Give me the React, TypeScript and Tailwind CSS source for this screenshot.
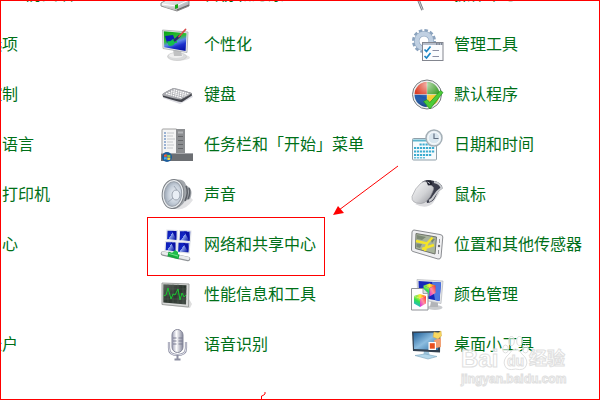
import type { ReactNode } from "react";

function Icon({ children }: { children: ReactNode }) {
  return (
    <svg viewBox="0 0 32 32" className="size-8 shrink-0 overflow-visible" aria-hidden="true">
      {children}
    </svg>
  );
}

/* Gradients shared by all of the icons */
function SharedGradients() {
  return (
    <svg className="absolute size-0" aria-hidden="true">
      <defs>
        <linearGradient id="silver" x1="0" y1="0" x2="1" y2="1">
          <stop offset="0" stopColor="#fbfbfb" />
          <stop offset="0.55" stopColor="#d2d3d6" />
          <stop offset="1" stopColor="#8f9096" />
        </linearGradient>
        <linearGradient id="blueScreen" x1="0" y1="0" x2="1" y2="0.6">
          <stop offset="0" stopColor="#0a18a8" />
          <stop offset="0.5" stopColor="#1226c8" />
          <stop offset="0.52" stopColor="#8fa6f0" />
          <stop offset="1" stopColor="#0614a0" />
        </linearGradient>
        <linearGradient id="paintScreen" x1="0.3" y1="0" x2="0.7" y2="1">
          <stop offset="0" stopColor="#10a81c" />
          <stop offset="0.38" stopColor="#30c038" />
          <stop offset="0.55" stopColor="#5c86e8" />
          <stop offset="0.75" stopColor="#1c30cc" />
          <stop offset="1" stopColor="#0614a8" />
        </linearGradient>
        <radialGradient id="cone" cx="0.6" cy="0.5" r="0.6">
          <stop offset="0" stopColor="#f4f7fb" />
          <stop offset="0.6" stopColor="#c6cfda" />
          <stop offset="1" stopColor="#9aa5b3" />
        </radialGradient>
        <linearGradient id="mic" x1="0" y1="0" x2="1" y2="0">
          <stop offset="0" stopColor="#9a9cb2" />
          <stop offset="0.4" stopColor="#ffffff" />
          <stop offset="1" stopColor="#85879c" />
        </linearGradient>
        <linearGradient id="graphite" x1="0" y1="0" x2="1" y2="1">
          <stop offset="0" stopColor="#5b655d" />
          <stop offset="0.5" stopColor="#2c352e" />
          <stop offset="1" stopColor="#454d47" />
        </linearGradient>
        <linearGradient id="skyScreen" x1="0" y1="0" x2="1" y2="1">
          <stop offset="0" stopColor="#1f5f98" />
          <stop offset="0.5" stopColor="#8cbde0" />
          <stop offset="1" stopColor="#2a6da4" />
        </linearGradient>
        <linearGradient id="cubeTop" x1="0" y1="0" x2="1" y2="0">
          <stop offset="0" stopColor="#30e060" />
          <stop offset="0.5" stopColor="#ffee30" />
          <stop offset="1" stopColor="#ff4020" />
        </linearGradient>
        <linearGradient id="cubeLeft" x1="0.6" y1="0" x2="0.3" y2="1">
          <stop offset="0" stopColor="#f4f040" />
          <stop offset="0.4" stopColor="#30e050" />
          <stop offset="1" stopColor="#20a8f0" />
        </linearGradient>
        <linearGradient id="cubeRight" x1="1" y1="0" x2="0" y2="1">
          <stop offset="0" stopColor="#ff3020" />
          <stop offset="0.5" stopColor="#ff90a0" />
          <stop offset="1" stopColor="#d020e0" />
        </linearGradient>
        <radialGradient id="gloss" cx="0.5" cy="0.1" r="0.9">
          <stop offset="0" stopColor="#fff" stopOpacity="0.6" />
          <stop offset="0.6" stopColor="#fff" stopOpacity="0" />
          <stop offset="1" stopColor="#000" stopOpacity="0.25" />
        </radialGradient>
      </defs>
    </svg>
  );
}

function DriveIcon() {
  return (
    <Icon>
      <path d="M-1 24 L10 18 L27 20 L27 27 L15 32 L-1 27Z" fill="url(#silver)" stroke="#8d8d8d" />
      <path d="M0 25 L14 27 L27 21" fill="none" stroke="#fff" />
      <path d="M2 27 L13 29 V31 L2 28Z" fill="#c4c4c4" />
      <path d="M13 26 L16 25 V29 L13 30Z" fill="#18a818" />
      <path d="M15 31 L27 26" stroke="#666" strokeWidth="1.2" />
    </Icon>
  );
}

function FlagIcon() {
  return (
    <Icon>
      <path d="M4 2 Q12 -1 16 4 T28 4 L30 17 Q24 21 18 16 T7 17Z" fill="#f3f5f8" stroke="#8d9299" />
      <path d="M2 10 L10.500 31" stroke="#777b82" strokeWidth="2.600" />
      <path d="M2 10 L10.500 31" stroke="#c9ccd1" strokeWidth="1" />
    </Icon>
  );
}

function PersonalizeIcon() {
  return (
    <Icon>
      <ellipse cx="18" cy="28.500" rx="10" ry="3" fill="#e4e4e4" />
      <ellipse cx="15" cy="27.500" rx="9.500" ry="4" fill="#d9dadb" stroke="#bdbdbd" strokeWidth="0.500" />
      <ellipse cx="14" cy="26.500" rx="7" ry="2.400" fill="#efefef" />
      <path d="M11 20 L19 22 L20 27 L12 27Z" fill="#c0c1c2" />
      <path d="M0.500 1 L26 3 L25 23.500 L1 19.500Z" fill="#e6e8ea" stroke="#a9abad" strokeWidth="0.800" />
      <path d="M1.800 2.300 L24.500 4.300 L23.600 22 L2.200 18.200Z" fill="url(#paintScreen)" />
      <path d="M3 7 L11 6 L13 11 L5 14Z" fill="#0c1fb4" />
      <path d="M5 12.500 Q9 12.500 11 10 L15 12 Q16 14 13 14 Q11 18 6.500 16.500Z" fill="#14c04c" />
      <path d="M12 12 L18 6.500" stroke="#262c70" strokeWidth="2.400" />
      <path d="M17 7.500 L23.500 0.500" stroke="#d84a4a" strokeWidth="1.800" strokeLinecap="round" />
    </Icon>
  );
}

function KeyboardIcon() {
  return (
    <Icon>
      <path d="M1 19 L18 25 L31 18 L30 16 L2 15Z" fill="#dcdce2" />
      <path d="M0.500 15.500 Q1 14 11 9.500 Q13 9 29.500 14 L30 16.500 L20 23 Q18 23.500 1 18Z" fill="#43454c" />
      <path d="M0.500 15 Q1 14 11 9 Q13 8.500 29.500 14 Q30 15 19 20.500 Q17 21 1 16.500Z" fill="#a8a9ae" />
      <path d="M4 14.500 L20 19 M6.500 13.200 L22.500 17.500 M9 12 L25 16.300 M11.500 10.800 L27 15" stroke="#fff" strokeWidth="1.300" strokeDasharray="1.700 0.600" />
    </Icon>
  );
}

function TaskbarIcon() {
  return (
    <Icon>
      <rect x="0" y="0" width="15" height="25" rx="1" fill="#f5f5f5" stroke="#a2a2a2" />
      <rect x="14" y="0" width="9" height="25" fill="#8c8e91" />
      <rect x="16" y="2.500" width="5" height="2" fill="#b4b6b9" />
      <path d="M16 7.500h5M16 11.500h5M16 15.500h5M16 19.500h5" stroke="#65676a" />
      <path d="M2 4h2M2 7h2M2 10h2M2 13h2M2 16h2M2 19h2" stroke="#7c9cc8" strokeWidth="1.300" />
      <path d="M5 4h7M5 7h6M5 10h8M5 13h6M5 16h7M5 19h6" stroke="#c4c7ca" />
      <rect x="-1" y="24" width="32" height="8" fill="#6c6f73" />
      <path d="M-1 24.500h32" stroke="#a4a6aa" />
      <circle cx="5" cy="28" r="5" fill="#1d5d9c" />
      <path d="M2 26 Q3.500 25 4.800 25.500 V27.800 H2Z" fill="#ee6038" />
      <path d="M5.300 25.800 Q7 26.500 8.300 25.700 V28 H5.300Z" fill="#8ccc40" />
      <path d="M2 28.300 H4.800 V30.800 Q3 30 2 30.700Z" fill="#48b0ec" />
      <path d="M5.300 28.400 H8.300 V30.400 Q7 31.400 5.300 30.700Z" fill="#fcd040" />
    </Icon>
  );
}

function SpeakerIcon() {
  return (
    <Icon>
      <path d="M10 29 Q22 34 31 21 L25 15Z" fill="#e2e2e4" />
      <path d="M12 1 Q22 -1 24 6 L28 9 Q31 14 28 20 L23 22 Q19 29 11 30Z" fill="#a2a6ab" />
      <path d="M24 7 Q27 13 23 22 M27 9 Q29 14 26 20" fill="none" stroke="#5c6067" strokeWidth="1.500" />
      <ellipse cx="11" cy="15" rx="10.800" ry="14.600" transform="rotate(6 11 15)" fill="#e8ebee" stroke="#7c8086" strokeWidth="1" />
      <ellipse cx="11" cy="15" rx="8.700" ry="12.300" transform="rotate(6 11 15)" fill="url(#cone)" stroke="#9ba2ac" />
      <ellipse cx="14" cy="16" rx="4" ry="5" fill="#e9eef5" stroke="#9ca4b0" />
      <path d="M12 7 L15 11 M6 23 L11 19" stroke="#9ea7b4" />
    </Icon>
  );
}

function NetworkIcon() {
  return (
    <Icon>
      <g fill="url(#blueScreen)" stroke="#e4e6ea" strokeWidth="1.200">
        <path d="M5 1 L15.500 1.500 L15 11.500 L4.500 10.500Z" />
        <path d="M17.500 1.500 L29 2 L28.300 12.500 L17 11.500Z" />
        <path d="M3.500 12.500 L14.500 13 L14 23 L3 21.500Z" />
        <path d="M16 13 L28 13.500 L27 24 L15.500 23Z" />
      </g>
      <path d="M10 2 L14 10 V2Z M22 2.500 L27 11 V3Z M9 13.500 L13 21.500 V13.500Z M21 14 L26 22.500 V14.500Z" fill="#0910a4" />
      <path d="M1 24.500 L26 30" stroke="#929699" strokeWidth="4.500" strokeLinecap="round" />
      <path d="M1 24 L26 29.500" stroke="#e9ebec" strokeWidth="3" strokeLinecap="round" />
      <path d="M6 25 L17 28" stroke="#14a83c" strokeWidth="4.500" />
      <path d="M9 25 L13 21 L16 23 V29Z" fill="#20bc4c" />
      <path d="M7 24.500 L16 27" stroke="#70e088" strokeWidth="1" />
    </Icon>
  );
}

function PerformanceIcon() {
  return (
    <Icon>
      <path d="M2 26 L28 29 L30 25 L27 20Z" fill="#dedede" />
      <path d="M0 4 L27 5 L26.500 28 L0 25.500Z" fill="#d8d9d8" stroke="#a0a2a0" />
      <path d="M1.300 5.300 L24.500 6.200 L24 25.500 L1.300 23.500Z" fill="url(#graphite)" />
      <path d="M1 10h24M1 15h24M1 20h24M6 5v19M11 5v19M16 5v20M21 6v19" stroke="#5d6a5f" strokeWidth="0.400" />
      <path d="M1.500 17 L4 16 L6 9 L9 20 L11 15 L13 16 L16 10 L18 21 L20 14 L22 18 L24 16" fill="none" stroke="#1bc832" strokeWidth="1" />
    </Icon>
  );
}

function MicrophoneIcon() {
  return (
    <Icon>
      <path d="M7 13 V19 Q7 26 15.500 26 Q24 26 24 19 V13" fill="none" stroke="#82849a" strokeWidth="2.200" />
      <path d="M7 13 V19 Q7 26 15.500 26 Q24 26 24 19 V13" fill="none" stroke="#dcdde6" strokeWidth="1.100" />
      <path d="M15.500 26 V30 M12.500 30.500 H18.500" stroke="#8d8fa2" strokeWidth="2" />
      <rect x="10" y="0.500" width="11" height="23" rx="5.500" fill="url(#mic)" stroke="#858799" />
      <path d="M11 9h3.500M16.500 9h4M11 12h3.500M16.500 12h4M11 15h3.500M16.500 15h4" stroke="#72748a" strokeWidth="0.900" />
    </Icon>
  );
}

function AdminToolsIcon() {
  return (
    <Icon>
      <circle cx="12" cy="12" r="10.300" fill="none" stroke="#8ba3be" strokeWidth="3.400" strokeDasharray="3.400 2" />
      <circle cx="12" cy="12" r="7.300" fill="none" stroke="#90a7c0" strokeWidth="5.500" />
      <circle cx="12" cy="12" r="7.300" fill="none" stroke="#c0d0e2" strokeWidth="4.200" />
      <rect x="10.500" y="13.500" width="20.500" height="18" fill="#fbfcfe" stroke="#83868f" />
      <path d="M11 15h19.500" stroke="#b7bfcc" strokeWidth="2" />
      <path d="M24 15h1.500M26.500 15h1.500M29 15h1.500" stroke="#475062" />
      <path d="M12.500 20.500l2 2 4-5M12.500 27l2 2 4-5" fill="none" stroke="#1d86c4" strokeWidth="1.700" />
      <path d="M20.500 21.500h6.500M20.500 27.500h6.500" stroke="#8a8ea4" strokeWidth="1.200" />
    </Icon>
  );
}

function DefaultProgramsIcon() {
  return (
    <Icon>
      <circle cx="15" cy="15.500" r="14.500" fill="#eef0f1" stroke="#777b80" />
      <path d="M14.800 15.300 V3 A12.500 12.500 0 0 0 2.500 15.300Z" fill="#dc3c24" />
      <path d="M15.200 15.300 V3 A12.500 12.500 0 0 1 27.500 15.300Z" fill="#44a030" />
      <path d="M14.800 15.700 V28 A12.500 12.500 0 0 1 2.500 15.700Z" fill="#1c58ac" />
      <path d="M15.200 15.700 V28 A12.500 12.500 0 0 0 27.500 15.700Z" fill="#f8cc30" />
      <circle cx="15" cy="15.500" r="12.500" fill="url(#gloss)" />
      <path d="M11.500 22.500 L15 20.500 L17.800 23.500 L28.500 11.500 L31 13.500 L18 30Z" fill="#4ccc38" stroke="#208c20" strokeWidth="0.700" />
    </Icon>
  );
}

function DateTimeIcon() {
  return (
    <Icon>
      <rect x="0.500" y="9.500" width="24" height="21.500" rx="1" fill="#f7fbfd" stroke="#90a0aa" />
      <path d="M1 11.500h23" stroke="#5cb4cc" strokeWidth="2" />
      <path d="M7.500 15.500h15" stroke="#3cacd0" strokeWidth="2.200" strokeDasharray="2.200 0.800" />
      <path d="M2 19h21M2 22.500h21M2 26h18" stroke="#3cacd0" strokeWidth="2.200" strokeDasharray="2.200 0.800" />
      <path d="M2 28.700h11" stroke="#68c0dc" strokeWidth="1.500" strokeDasharray="2.200 0.800" />
      <circle cx="22" cy="9" r="8" fill="#e9f0f5" stroke="#a4afb6" strokeWidth="1.500" />
      <circle cx="22" cy="9" r="5.800" fill="#d9e6ef" stroke="#f6f9fb" />
      <path d="M22 4.500 V9.500 H26.500" fill="none" stroke="#647284" strokeWidth="1.200" />
    </Icon>
  );
}

function MouseIcon() {
  return (
    <Icon>
      <path d="M3 25 Q14 31 21 24 L28 13Z" fill="#dcdcdf" />
      <path d="M10 3 Q14 0 20 1.500 Q30 3 30.500 9.500 Q26 12 24 17 Q21 24 15 24Z" fill="#3c3e4c" />
      <path d="M22 3 Q28 4 29.500 9 Q25 12 22 17 Q20 21 17 22" fill="none" stroke="#c8cace" strokeWidth="2" />
      <path d="M9 4 Q12 1.500 15 3 L17 6 Q24 7 20.500 13 Q16 24 9 24.500 Q-1 24.500 0 17.500 Q3 9 9 4Z" fill="url(#silver)" stroke="#989aa0" strokeWidth="0.600" />
      <path d="M14 1.500 L19 1.500 L20.500 5.500 L16 6.500Z" fill="#20222e" />
      <path d="M15.500 3 L18 4.500" stroke="#c8cad4" />
    </Icon>
  );
}

function LocationIcon() {
  return (
    <Icon>
      <path d="M2 1 L28 5.500 Q31 6 30.800 8 L29 28 Q28.500 30.500 26 30 L1 22.500 Q-1 22 -0.500 20 L0 3 Q0.500 1 2 1Z" fill="#efeff1" stroke="#8b8d91" />
      <path d="M4 4.500 L24.500 8 L23 25 L3.500 19.500Z" fill="#a9b49c" stroke="#70746c" />
      <path d="M5 6 L14 8 L10 11 L5 10Z M18 9 L23 10 L20 14Z M4.500 14.500 L10 15 L8 19 L4.500 18Z" fill="#7c8974" />
      <path d="M4 12 L15 14.500 L20.500 8.500 M15 14.500 L13 22 M10 20 L22 16" fill="none" stroke="#f4e428" strokeWidth="2.400" />
      <circle cx="27" cy="17" r="1.200" fill="#65686e" />
      <path d="M27.500 10v4M26.500 21v4" stroke="#94979c" />
    </Icon>
  );
}

function Cube({ transform }: { transform: string }) {
  return (
    <g transform={transform}>
      <path d="M0 2 L6 0 L12 2 L6 4.500Z" fill="url(#cubeTop)" />
      <path d="M0 2 L6 4.500 V13 L0 9.500Z" fill="url(#cubeLeft)" />
      <path d="M12 2 L6 4.500 V13 L12 9.500Z" fill="url(#cubeRight)" />
    </g>
  );
}

function ColorIcon() {
  return (
    <Icon>
      <ellipse cx="23" cy="28.500" rx="7.500" ry="2.500" fill="#c9cbce" />
      <path d="M19 22 L26 23 L26 28 L18 28Z" fill="#b2b4b8" />
      <path d="M5 0.500 L31 2 L29 24.500 L6 20Z" fill="#e4e6ea" stroke="#b4b7bc" strokeWidth="0.700" />
      <path d="M6.500 2 L29 3.500 L27.500 22 L7 18Z" fill="#1628b8" />
      <path d="M20 3 L29 3.500 L27.500 22 L23 21Z" fill="#4c78e0" />
      <Cube transform="translate(11.500 4.500)" />
      <path d="M-0.500 9.500 H11 L16 14.500 V31 H-0.500Z" fill="#fdfdfe" stroke="#8f9297" />
      <path d="M11 9.500 V14.500 H16" fill="#dcdee2" stroke="#8f9297" strokeWidth="0.800" />
      <Cube transform="translate(2 15)" />
    </Icon>
  );
}

function GadgetsIcon() {
  return (
    <Icon>
      <path d="M12 22 L17 23 L18 28 L11 28Z" fill="#9cc4dc" />
      <path d="M3 26.500 L13 25 L25 27.500 L16 30Z" fill="#b4d8ec" stroke="#7ca4bc" strokeWidth="0.600" />
      <path d="M0 2.500 L28.500 2 L28 23.500 L1 22Z" fill="#324050" />
      <path d="M1.500 4 L26.500 3.500 L26 21 L2 20Z" fill="url(#skyScreen)" />
      <path d="M22 3 L26 4 L29 2 L29.500 7 L26 10 L21 8Z" fill="#f8d860" stroke="#d4a83c" strokeWidth="0.500" />
      <path d="M22 11 L29 9 V18 L24 19Z" fill="#f0a074" />
      <rect x="16.500" y="13" width="7.500" height="8" fill="#fff" />
      <rect x="17.800" y="14.200" width="5" height="5.500" fill="#e85020" />
    </Icon>
  );
}

function Callout() {
  return (
    <>
      <span className="pointer-events-none absolute -top-[3px] -left-[15px] h-[59px] w-[178px] border border-[#ff0000]" />
      <svg viewBox="0 0 68 52" className="pointer-events-none absolute -top-[55px] left-[170px] h-[52px] w-[68px]" aria-hidden="true">
        <path d="M66 1 L7 45" stroke="#ff0000" strokeWidth="1" />
        <path d="M1 50 L6 41 L12 48Z" fill="#ff0000" />
      </svg>
    </>
  );
}

type Entry = { label: string; icon?: ReactNode; marked?: boolean };

const entries: Entry[] = [
  { label: "Windows 防火墙" },
  { label: "备份和还原", icon: <DriveIcon /> },
  { label: "操作中心", icon: <FlagIcon /> },
  { label: "电源选项" },
  { label: "个性化", icon: <PersonalizeIcon /> },
  { label: "管理工具", icon: <AdminToolsIcon /> },
  { label: "家长控制" },
  { label: "键盘", icon: <KeyboardIcon /> },
  { label: "默认程序", icon: <DefaultProgramsIcon /> },
  { label: "区域和语言" },
  { label: "任务栏和「开始」菜单", icon: <TaskbarIcon /> },
  { label: "日期和时间", icon: <DateTimeIcon /> },
  { label: "设备和打印机" },
  { label: "声音", icon: <SpeakerIcon /> },
  { label: "鼠标", icon: <MouseIcon /> },
  { label: "同步中心" },
  { label: "网络和共享中心", icon: <NetworkIcon />, marked: true },
  { label: "位置和其他传感器", icon: <LocationIcon /> },
  { label: "系统" },
  { label: "性能信息和工具", icon: <PerformanceIcon /> },
  { label: "颜色管理", icon: <ColorIcon /> },
  { label: "用户帐户" },
  { label: "语音识别", icon: <MicrophoneIcon /> },
  { label: "桌面小工具", icon: <GadgetsIcon /> },
];

function Watermark() {
  return (
    <div className="pointer-events-none absolute right-8 bottom-3 w-[106px] font-['Liberation_Sans','Noto_Sans_CJK_SC',sans-serif] font-bold text-white/70 [-webkit-text-stroke:1px_#e0e0e0]">
      <div className="flex h-9 items-end leading-6">
        <span className="w-[41px] text-2xl leading-6">Bai</span>
        <span className="relative flex h-9 w-[27px] items-end justify-center">
          <svg viewBox="0 0 27 36" className="absolute inset-0" aria-hidden="true">
            <g fill="#fff" fillOpacity="0.6" stroke="#e0e0e0">
              <ellipse cx="3.500" cy="14" rx="2.800" ry="4" />
              <ellipse cx="9.500" cy="6" rx="2.800" ry="4.500" />
              <ellipse cx="17.500" cy="6" rx="2.800" ry="4.500" />
              <ellipse cx="23.500" cy="14" rx="2.800" ry="4" />
              <path d="M13.500 14 Q17 14 20 19 Q27 25 24 31 Q22 36 13.500 34 Q5 36 3 31 Q0 25 7 19 Q10 14 13.500 14Z" />
            </g>
          </svg>
          <span className="relative text-sm leading-5">du</span>
        </span>
        <span className="text-lg leading-6">经验</span>
      </div>
      <div className="text-xs leading-4">jingyan.baidu.com</div>
    </div>
  );
}

export default function App() {
  return (
    <main
      lang="zh-CN"
      className="relative min-h-screen overflow-hidden border border-[#ff0000] bg-white font-['Noto_Sans_CJK_SC',sans-serif] text-base text-[#007018]"
    >
      <SharedGradients />
      <nav aria-label="控制面板" className="-mt-[31px] -ml-[89px]">
        <ul className="grid grid-cols-[250px_250px_1fr]">
          {entries.map((entry) => (
            <li key={entry.label} className="relative h-[50px]">
              <a href="#" className="flex h-full items-center gap-[10px] whitespace-nowrap">
                {entry.icon ?? <span className="size-8 shrink-0" />}
                <span className="pb-1">{entry.label}</span>
              </a>
              {entry.marked && <Callout />}
            </li>
          ))}
        </ul>
      </nav>
      <Watermark />
      <svg viewBox="0 0 5 7" className="absolute bottom-0 left-[260px] h-[7px] w-[5px]" aria-hidden="true">
        <path d="M0.500 7 V4 L2 3.500 L4 2 V0" fill="none" stroke="#ff0000" />
      </svg>
    </main>
  );
}
